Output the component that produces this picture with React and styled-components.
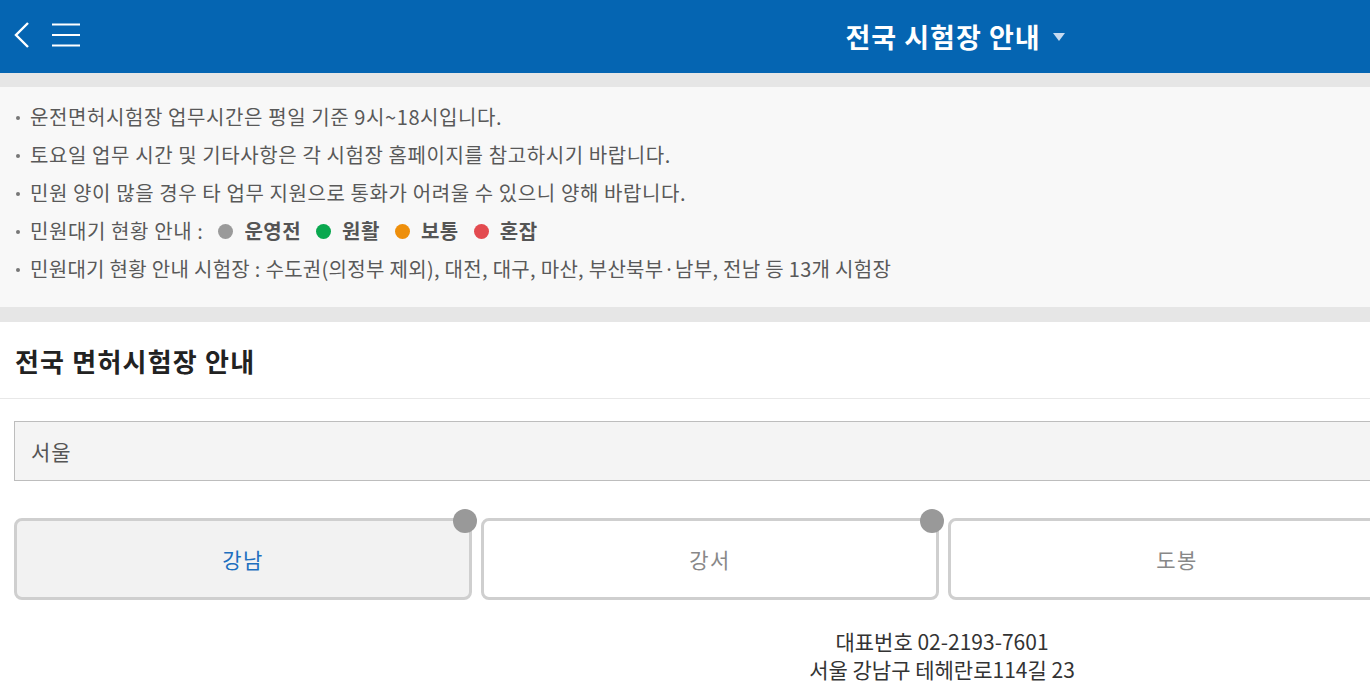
import React, { useState } from 'react';
import styled, { createGlobalStyle } from 'styled-components';

const GlobalStyle = createGlobalStyle`
  html, body {
    margin: 0;
    padding: 0;
    background: #e6e6e6;
    overflow: hidden;
  }
  * { box-sizing: border-box; }
  body {
    font-family: "Noto Sans CJK KR", "Noto Sans", sans-serif;
  }
`;

const notices = [
  '운전면허시험장 업무시간은 평일 기준 9시~18시입니다.',
  '토요일 업무 시간 및 기타사항은 각 시험장 홈페이지를 참고하시기 바랍니다.',
  '민원 양이 많을 경우 타 업무 지원으로 통화가 어려울 수 있으니 양해 바랍니다.',
];

const legend = [
  { color: '#9a9a9a', label: '운영전' },
  { color: '#0aa84f', label: '원활' },
  { color: '#ee8f0b', label: '보통' },
  { color: '#e34b50', label: '혼잡' },
];

const centers = [
  { name: '강남', dot: true },
  { name: '강서', dot: true },
  { name: '도봉', dot: false },
];

export default function App() {
  const [active, setActive] = useState(0);

  return (
    <>
      <GlobalStyle />
      <Page>
        <Header>
          <IconGroup>
            <svg width="20" height="28" viewBox="0 0 20 28">
              <path d="M16 2 L4 14 L16 26" fill="none" stroke="#fff" strokeWidth="2.4" />
            </svg>
            <svg width="30" height="26" viewBox="0 0 30 26">
              <path d="M1 2.5 H29 M1 13 H29 M1 23.5 H29" stroke="#fff" strokeWidth="2.2" />
            </svg>
          </IconGroup>
          <Title>
            전국 시험장 안내
            <Caret />
          </Title>
        </Header>

        <NoticeBox>
          <NoticeList>
            {notices.map((n) => (
              <li key={n}>{n}</li>
            ))}
            <li>
              민원대기 현황 안내 :
              {legend.map((l) => (
                <Legend key={l.label}>
                  <Dot $color={l.color} />
                  {l.label}
                </Legend>
              ))}
            </li>
            <li>민원대기 현황 안내 시험장 : 수도권(의정부 제외), 대전, 대구, 마산, 부산북부·남부, 전남 등 13개 시험장</li>
          </NoticeList>
        </NoticeBox>

        <Section>
          <SectionHead>전국 면허시험장 안내</SectionHead>
          <Body>
            <Select>서울</Select>
            <CardRow>
              {centers.map((c, i) => (
                <Card key={c.name} $active={i === active} onClick={() => setActive(i)}>
                  {c.name}
                  {c.dot && <StatusDot />}
                </Card>
              ))}
            </CardRow>
            <Info>
              <p>대표번호 02-2193-7601</p>
              <p>서울 강남구 테헤란로114길 23</p>
            </Info>
          </Body>
        </Section>
      </Page>
    </>
  );
}

const Page = styled.div`
  width: 1884px;
  min-height: 693px;
`;

const Header = styled.header`
  height: 73px;
  background: #0565b2;
  display: flex;
  align-items: center;
  justify-content: center;
  position: relative;
`;

const IconGroup = styled.div`
  position: absolute;
  left: 12px;
  top: 21px;
  display: flex;
  align-items: center;
  gap: 19px;
`;

const Title = styled.h1`
  margin: 0 0 0 26px;
  color: #fff;
  font-size: 27px;
  font-weight: 700;
  display: flex;
  align-items: center;
  gap: 12px;
  letter-spacing: 1px;
`;

const Caret = styled.span`
  width: 0;
  height: 0;
  border-left: 6px solid transparent;
  border-right: 6px solid transparent;
  border-top: 8px solid #c6daf0;
`;

const NoticeBox = styled.div`
  margin-top: 14px;
  background: #f8f8f8;
  padding: 11px 0 19px;
`;

const NoticeList = styled.ul`
  list-style: none;
  margin: 0;
  padding: 0 0 0 30px;

  li {
    position: relative;
    line-height: 38px;
    font-size: 20px;
    color: #595959;
    letter-spacing: 0.6px;
    display: flex;
    align-items: center;
  }

  li:last-child {
    letter-spacing: 0.3px;
  }

  li::before {
    content: '';
    position: absolute;
    left: -14px;
    top: 18px;
    width: 4px;
    height: 4px;
    border-radius: 50%;
    background: #777;
  }
`;

const Legend = styled.span`
  display: inline-flex;
  align-items: center;
  gap: 11px;
  margin-left: 15px;
  font-weight: 700;
  color: #555;
  letter-spacing: 0.5px;
`;

const Dot = styled.span`
  width: 15px;
  height: 15px;
  border-radius: 50%;
  background: ${(p) => p.$color};
`;

const Section = styled.section`
  margin-top: 15px;
  background: #fff;
  min-height: 400px;
`;

const SectionHead = styled.h2`
  margin: 0;
  height: 77px;
  border-bottom: 1px solid #e8e8e8;
  padding: 0 15px;
  display: flex;
  align-items: center;
  font-size: 26px;
  font-weight: 700;
  color: #222;
  letter-spacing: 1.2px;
`;

const Body = styled.div`
  padding: 22px 14px 0;
`;

const Select = styled.div`
  height: 60px;
  background: #f4f4f4;
  border: 1px solid #bdbdbd;
  display: flex;
  align-items: center;
  padding: 0 16px;
  font-size: 21px;
  letter-spacing: 1px;
  color: #555;
`;

const CardRow = styled.div`
  margin-top: 37px;
  display: grid;
  grid-template-columns: repeat(4, 458px);
  gap: 9px;
`;

const Card = styled.button`
  position: relative;
  height: 82px;
  border: 3px solid #cfcfcf;
  border-radius: 8px;
  background: ${(p) => (p.$active ? '#f2f2f2' : '#fff')};
  color: ${(p) => (p.$active ? '#1d6fbf' : '#888')};
  font-family: inherit;
  font-size: 21px;
  letter-spacing: 1.5px;
  cursor: pointer;
`;

const StatusDot = styled.span`
  position: absolute;
  right: -8px;
  top: -12px;
  width: 24px;
  height: 24px;
  border-radius: 50%;
  background: #999;
`;

const Info = styled.div`
  margin-top: 27px;
  text-align: center;
  font-size: 21px;
  color: #333;
  line-height: 28px;

  p {
    margin: 0;
  }
`;
